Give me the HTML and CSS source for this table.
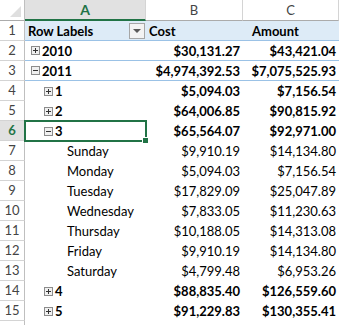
FILE: index.html
```html
<!DOCTYPE html>
<html>
<head>
<meta charset="utf-8">
<link rel="stylesheet" href="styles.css">
</head>
<body>
<div class="sheet">
  <div class="row colhead">
    <div class="rh corner"><span class="tri"></span></div>
    <div class="ch ca sel">A</div>
    <div class="ch cb">B</div>
    <div class="ch cc">C</div>
  </div>

  <div class="row hdr">
    <div class="rh">1</div>
    <div class="cell ca b">Row Labels<span class="dd"><span class="ddtri"></span></span></div>
    <div class="cell cb b">Cost</div>
    <div class="cell cc b lab">Amount</div>
  </div>

  <div class="row l0">
    <div class="rh">2</div>
    <div class="cell ca b"><span class="tg plus"></span>2010</div>
    <div class="cell cb b num">$30,131.27</div>
    <div class="cell cc b num">$43,421.04</div>
  </div>

  <div class="row l0">
    <div class="rh">3</div>
    <div class="cell ca b"><span class="tg minus"></span>2011</div>
    <div class="cell cb b num">$4,974,392.53</div>
    <div class="cell cc b num">$7,075,525.93</div>
  </div>

  <div class="row">
    <div class="rh">4</div>
    <div class="cell ca b i1"><span class="tg plus"></span>1</div>
    <div class="cell cb b num">$5,094.03</div>
    <div class="cell cc b num">$7,156.54</div>
  </div>

  <div class="row">
    <div class="rh">5</div>
    <div class="cell ca b i1"><span class="tg plus"></span>2</div>
    <div class="cell cb b num">$64,006.85</div>
    <div class="cell cc b num">$90,815.92</div>
  </div>

  <div class="row">
    <div class="rh rsel">6</div>
    <div class="cell ca b i1 active"><span class="tg minus"></span>3<span class="handle"></span></div>
    <div class="cell cb b num">$65,564.07</div>
    <div class="cell cc b num">$92,971.00</div>
  </div>

  <div class="row">
    <div class="rh">7</div>
    <div class="cell ca i2">Sunday</div>
    <div class="cell cb num">$9,910.19</div>
    <div class="cell cc num">$14,134.80</div>
  </div>

  <div class="row">
    <div class="rh">8</div>
    <div class="cell ca i2">Monday</div>
    <div class="cell cb num">$5,094.03</div>
    <div class="cell cc num">$7,156.54</div>
  </div>

  <div class="row">
    <div class="rh">9</div>
    <div class="cell ca i2">Tuesday</div>
    <div class="cell cb num">$17,829.09</div>
    <div class="cell cc num">$25,047.89</div>
  </div>

  <div class="row">
    <div class="rh">10</div>
    <div class="cell ca i2">Wednesday</div>
    <div class="cell cb num">$7,833.05</div>
    <div class="cell cc num">$11,230.63</div>
  </div>

  <div class="row">
    <div class="rh">11</div>
    <div class="cell ca i2">Thursday</div>
    <div class="cell cb num">$10,188.05</div>
    <div class="cell cc num">$14,313.08</div>
  </div>

  <div class="row">
    <div class="rh">12</div>
    <div class="cell ca i2">Friday</div>
    <div class="cell cb num">$9,910.19</div>
    <div class="cell cc num">$14,134.80</div>
  </div>

  <div class="row">
    <div class="rh">13</div>
    <div class="cell ca i2">Saturday</div>
    <div class="cell cb num">$4,799.48</div>
    <div class="cell cc num">$6,953.26</div>
  </div>

  <div class="row">
    <div class="rh">14</div>
    <div class="cell ca b i1"><span class="tg plus"></span>4</div>
    <div class="cell cb b num">$88,835.40</div>
    <div class="cell cc b num">$126,559.60</div>
  </div>

  <div class="row">
    <div class="rh">15</div>
    <div class="cell ca b i1"><span class="tg plus"></span>5</div>
    <div class="cell cb b num">$91,229.83</div>
    <div class="cell cc b num">$130,355.41</div>
  </div>

  <div class="row">
    <div class="rh"></div>
    <div class="cell ca"></div>
    <div class="cell cb"></div>
    <div class="cell cc"></div>
  </div>
</div>
</body>
</html>
```

FILE: styles.css
```css
html, body {
  margin: 0;
  padding: 0;
  background: #ffffff;
}

.sheet {
  width: 339px;
  height: 325px;
  overflow: hidden;
  font-family: Lato, "Liberation Sans", sans-serif;
  font-size: 13px;
  color: #000;
}

.row {
  display: flex;
  height: 20px;
}

.colhead {
  height: 21px;
}

.rh {
  flex: none;
  border-right: 1px solid #bfbfbf;
  border-bottom: 1px solid #d4d4d4;
  box-sizing: border-box;
  width: 25px;
  text-align: center;
  color: #444;
  font-size: 13px;
  line-height: 19px;
  background: #fff;
}

.rh.rsel {
  background: #e1e1e1;
  color: #217346;
  font-weight: bold;
}

.corner {
  position: relative;
  background: #fff;
  border-bottom: 1px solid #ababab;
}

.tri {
  position: absolute;
  right: 3px;
  bottom: 3px;
  width: 0;
  height: 0;
  border-left: 11px solid transparent;
  border-bottom: 11px solid #dfdfdf;
}

.ch {
  box-sizing: border-box;
  flex: none;
  text-align: center;
  color: #444;
  line-height: 20px;
  font-size: 13px;
  background: #fff;
  border-right: 1px solid #d4d4d4;
  border-bottom: 1px solid #ababab;
}

.ch.sel {
  background: #e1e1e1;
  color: #217346;
  font-weight: bold;
  font-size: 14px;
  border-bottom: 2px solid #217346;
  line-height: 19px;
}

.ca { width: 121px; flex: none; }
.cb { width: 97px; flex: none; }
.cc { width: 96px; flex: none; }

.cell {
  box-sizing: border-box;
  line-height: 20px;
  white-space: nowrap;
  padding-left: 3px;
  display: flex;
  align-items: center;
  position: relative;
}

.b { font-weight: bold; }

.num {
  justify-content: flex-end;
  padding-left: 0;
  padding-right: 3px;
}

.hdr .cell {
  background: #ddebf7;
  border-bottom: 1px solid #9bc2e6;
}

.hdr .lab {
  padding-left: 9px;
}

.l0 .cell {
  border-bottom: 1px solid #9bc2e6;
}

.dd {
  position: absolute;
  right: 1px;
  top: 2px;
  width: 16px;
  height: 16px;
  box-sizing: border-box;
  border: 1px solid #a6a6a6;
  background: #f3f3f3;
  display: flex;
  align-items: center;
  justify-content: center;
}

.ddtri {
  width: 0;
  height: 0;
  border-left: 4px solid transparent;
  border-right: 4px solid transparent;
  border-top: 4px solid #595959;
}

.tg {
  width: 9px;
  height: 9px;
  box-sizing: border-box;
  border: 1px solid #8c8c8c;
  background: #f0f0f0;
  margin-left: 3px;
  margin-right: 2px;
  position: relative;
  flex: none;
}

.tg::before {
  content: "";
  position: absolute;
  left: 1px;
  top: 3px;
  width: 5px;
  height: 1px;
  background: #333;
}

.tg.plus::after {
  content: "";
  position: absolute;
  left: 3px;
  top: 1px;
  width: 1px;
  height: 5px;
  background: #333;
}

.i1 { padding-left: 16px; }
.i2 { padding-left: 42px; }

.active {
  outline: 2px solid #217346;
  outline-offset: -1px;
}

.handle {
  position: absolute;
  right: -3px;
  bottom: -3px;
  width: 5px;
  height: 5px;
  background: #217346;
  border: 1px solid #fff;
}
```
